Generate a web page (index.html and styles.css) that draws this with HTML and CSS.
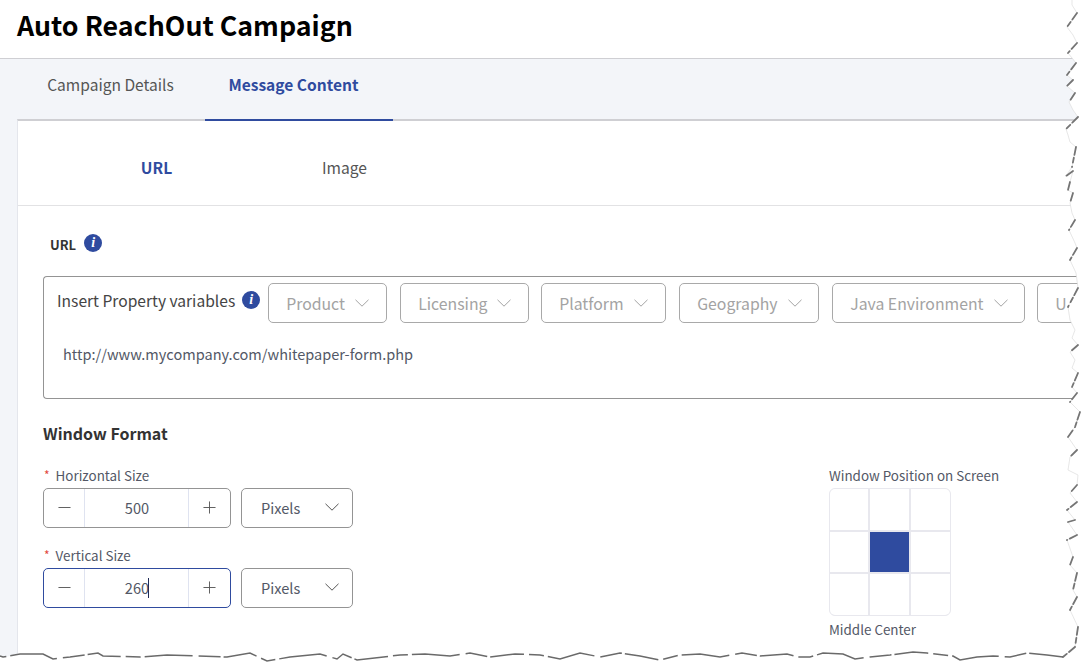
FILE: index.html
```html
<!DOCTYPE html>
<html lang="en">
<head>
<meta charset="utf-8">
<title>Auto ReachOut Campaign</title>
<link rel="stylesheet" href="styles.css">
</head>
<body>
<div class="page">
  <header class="page-header"><h1>Auto ReachOut Campaign</h1></header>
  <div class="shell">
    <nav class="tabs">
      <a class="tab">Campaign Details</a>
      <a class="tab tab-active">Message Content</a>
    </nav>
    <main class="panel">
      <div class="subtabs">
        <a class="subtab subtab-active">URL</a>
        <a class="subtab subtab-image">Image</a>
      </div>
      <section class="content">
        <div class="url-label"><span>URL</span><i class="info">i</i></div>
        <div class="url-box">
          <div class="vars">
            <span class="vars-label">Insert Property variables</span>
            <i class="info info-vars">i</i>
            <div class="chips">
              <span class="chip chip-product">Product<svg class="chev" viewBox="0 0 14 8"><path d="M.5.8 7 7.2 13.5.8"/></svg></span>
              <span class="chip chip-licensing">Licensing<svg class="chev" viewBox="0 0 14 8"><path d="M.5.8 7 7.2 13.5.8"/></svg></span>
              <span class="chip chip-platform">Platform<svg class="chev" viewBox="0 0 14 8"><path d="M.5.8 7 7.2 13.5.8"/></svg></span>
              <span class="chip chip-geo">Geography<svg class="chev" viewBox="0 0 14 8"><path d="M.5.8 7 7.2 13.5.8"/></svg></span>
              <span class="chip chip-java">Java Environment<svg class="chev" viewBox="0 0 14 8"><path d="M.5.8 7 7.2 13.5.8"/></svg></span>
              <span class="chip chip-user">U</span>
            </div>
          </div>
          <div class="url-value">http://www.mycompany.com/whitepaper-form.php</div>
        </div>
        <h2 class="section-title">Window Format</h2>
        <div class="format">
          <div class="sizes">
            <div class="field">
              <label class="field-label"><span class="req">*</span>Horizontal Size</label>
              <div class="controls">
                <div class="stepper">
                  <span class="step"><svg viewBox="0 0 14 14"><path d="M.5 7h13"/></svg></span>
                  <span class="value">500</span>
                  <span class="step step-right"><svg viewBox="0 0 14 14"><path d="M.5 7h13M7 .5v13"/></svg></span>
                </div>
                <div class="select"><span class="select-text">Pixels</span><svg class="chev chev-dark" viewBox="0 0 14 8"><path d="M.5.8 7 7.2 13.5.8"/></svg></div>
              </div>
            </div>
            <div class="field">
              <label class="field-label"><span class="req">*</span>Vertical Size</label>
              <div class="controls">
                <div class="stepper stepper-focus">
                  <span class="step"><svg viewBox="0 0 14 14"><path d="M.5 7h13"/></svg></span>
                  <span class="value value-caret">260</span>
                  <span class="step step-right"><svg viewBox="0 0 14 14"><path d="M.5 7h13M7 .5v13"/></svg></span>
                </div>
                <div class="select"><span class="select-text">Pixels</span><svg class="chev chev-dark" viewBox="0 0 14 8"><path d="M.5.8 7 7.2 13.5.8"/></svg></div>
              </div>
            </div>
          </div>
          <div class="position">
            <div class="field-label position-label">Window Position on Screen</div>
            <div class="pos-grid">
              <span></span><span></span><span></span>
              <span></span><span class="pos-on"></span><span></span>
              <span></span><span></span><span></span>
            </div>
            <div class="field-label pos-name">Middle Center</div>
          </div>
        </div>
      </section>
    </main>
  </div>
</div>
<svg class="torn" viewBox="0 0 1088 671" aria-hidden="true">
  <path class="torn-fill" d="M1072 0 L1072 5 1077 13 1067 27 1073 35 1077 43 1068 53 1076 63 1067 75 1073 80 1067 86 1075 93 1069 102 1073 110 1078 117 1066 129 1068 135 1070 142 1076 147 1072 167 1066 176 1073 171 1070 182 1068 190 1073 193 1070 203 1072 213 1075 220 1069 230 1075 243 1077 248 1070 260 1076 273 1078 288 1068 307 1070 320 1075 330 1072 338 1078 345 1070 352 1075 360 1072 368 1078 373 1072 387 1077 393 1070 402 1080 412 1075 427 1068 437 1077 450 1070 457 1068 470 1078 475 1077 485 1070 493 1077 502 1067 510 1075 520 1068 522 1077 535 1067 540 1073 557 1070 565 1077 573 1073 590 1077 597 1070 610 1078 627 1075 647 1063 657 1047 655 1027 652 1010 657 993 657 977 657 960 662 953 657 927 652 913 651 890 655 870 657 855 660 843 653 823 652 810 658 798 658 787 653 760 656 742 652 720 658 700 653 680 655 660 662 640 656 620 652 600 657 580 652 560 660 540 655 515 653 490 658 470 652 450 656 425 653 400 655 357 662 343 653 337 660 320 653 290 658 267 663 250 652 227 658 197 657 167 655 140 658 103 657 98 652 70 658 53 660 43 653 20 653 3 658 0 656 L0 671 1088 671 1088 0 Z"/>
  <path class="torn-faint" d="M1072 0 L1072 5 1077 13 1067 27 1073 35 1077 43 1068 53 1076 63 1067 75 1073 80 1067 86 1075 93 1069 102 1073 110 1078 117 1066 129 1068 135 1070 142 1076 147 1072 167 1066 176 1073 171 1070 182 1068 190 1073 193 1070 203 1072 213 1075 220 1069 230 1075 243 1077 248 1070 260 1076 273 1078 288 1068 307 1070 320 1075 330 1072 338 1078 345 1070 352 1075 360 1072 368 1078 373 1072 387 1077 393 1070 402 1080 412 1075 427 1068 437 1077 450 1070 457 1068 470 1078 475 1077 485 1070 493 1077 502 1067 510 1075 520 1068 522 1077 535 1067 540 1073 557 1070 565 1077 573 1073 590 1077 597 1070 610 1078 627 1075 647 1063 657"/>
  <path class="torn-right" d="M1077 13 1067 27M1077 43 1068 53M1076 63 1067 75M1073 80 1067 86M1075 93 1069 102M1078 117 1066 129M1076 147 1072 167M1073 171 1066 176M1070 182 1068 190M1073 193 1070 203M1075 220 1069 230M1077 248 1070 260M1078 288 1068 307M1078 345 1070 352M1078 373 1072 387M1077 393 1070 402M1080 412 1075 427 1068 437M1077 450 1070 457M1077 485 1070 493M1077 502 1067 510M1075 520 1068 522M1077 535 1067 540M1073 557 1070 565M1077 573 1073 590M1077 597 1070 610M1078 627 1075 647 1063 657"/>
  <path class="torn-bottom" d="M1063 657 1047 655 1027 653 1010 657 993 656 977 657 960 660 953 656 927 653 913 652 890 655 870 657 855 659 843 654 823 653 810 657 798 657 787 654 760 656 742 653 720 657 700 654 680 655 660 660 640 656 620 653 600 657 580 653 560 659 540 655 515 654 490 657 470 653 450 656 425 654 400 655 357 660 343 654 337 659 320 654 290 657 267 661 250 653 227 657 197 656 167 655 140 657 103 656 98 653 70 657 53 659 43 654 20 654 3 657 0 656"/>
</svg>
</body>
</html>
```
FILE: styles.css
```css
* { box-sizing: border-box; }
html, body { margin: 0; height: 671px; overflow: hidden; background: #fff; }
body { font-family: "Noto Sans CJK SC", "Noto Sans", sans-serif; color: #535866; position: relative; width: 1088px; }
.page { width: 1088px; height: 671px; display: flex; flex-direction: column; overflow: hidden; }

.page-header { height: 59px; border-bottom: 1px solid #cfcfd3; padding: 7px 0 0 17px; }
.page-header h1 { margin: 0; font-size: 26.75px; line-height: 36px; font-weight: 700; color: #000; white-space: nowrap; }

.shell { flex: 1; background: #f3f5f9; padding-left: 17px; display: flex; flex-direction: column; }
.tabs { height: 62px; display: flex; }
.tab { width: 188px; height: 62px; padding-top: 13px; padding-right: 1px; text-align: center; font-size: 15.55px; line-height: 24px; color: #555; border-bottom: 2px solid transparent; position: relative; z-index: 1; }
.tab-active { color: #2f4b9f; font-weight: 700; border-bottom-color: #2f4b9f; padding-right: 11px; }

.panel { flex: 1; margin-top: -2px; background: #fff; border-top: 2px solid #cfcfd3; border-left: 1px solid #e4e6ec; }
.subtabs { height: 85px; display: flex; border-bottom: 1px solid #e2e2e4; padding-left: 45px; }
.subtab { width: 187px; padding-top: 34px; text-align: center; font-size: 15.6px; line-height: 24px; color: #555; }
.subtab-active { color: #2f4b9f; font-weight: 700; }
.subtab-image { padding-left: 2px; }

.content { padding: 0 0 0 25px; }
.url-label { display: flex; align-items: center; height: 20px; margin: 28px 0 0 7px; font-size: 13px; font-weight: 700; color: #333; }
.info { display: inline-block; width: 18px; height: 18px; margin-left: 8px; border-radius: 50%; background: #2f4b9f; color: #fff; font: italic 700 14px/18px "Liberation Serif", serif; text-align: center; flex: none; position: relative; top: -1px; }
.url-box { height: 123px; margin-top: 22px; border: 1px solid #949494; border-right: 0; border-radius: 4px 0 0 4px; padding: 6px 0 0 13px; overflow: hidden; }
.vars { display: flex; align-items: flex-start; }
.vars-label { font-size: 15.6px; line-height: 24px; color: #444; white-space: nowrap; margin-top: 5px; }
.info-vars { margin: 9px 8px 0 7px; }
.chips { display: flex; gap: 13px; }
.chip { height: 40px; padding-left: 17px; border: 1px solid #a9a9a9; border-radius: 5px; display: flex; align-items: center; gap: 10px; font-size: 15.8px; color: #a3a3a3; white-space: nowrap; flex: none; }
.chip-product { width: 119px; }
.chip-licensing { width: 129px; margin-right: -1px; }
.chip-platform { width: 125px; }
.chip-geo { width: 140px; }
.chip-java { width: 193px; margin-right: -1px; }
.chip-user { width: 51px; border-right: 0; border-radius: 5px 0 0 5px; }
.chev { width: 14px; height: 8px; fill: none; stroke: #a3a3a3; stroke-width: 1; flex: none; }
.chev-dark { stroke: #555; margin-left: auto; }
.url-value { margin: 19px 0 0 6px; font-size: 14.55px; line-height: 24px; color: #535866; }

.section-title { margin: 22px 0 0; font-size: 16px; line-height: 24px; font-weight: 700; color: #333; }
.format { display: flex; margin-top: 19px; }
.sizes { width: 786px; display: flex; flex-direction: column; gap: 16px; flex: none; }
.field { display: flex; flex-direction: column; }
.field-label { display: block; font-size: 13.4px; line-height: 22px; color: #535866; height: 24px; }
.req { color: #e2483c; font-size: 12px; margin: 0 6px 0 1px; vertical-align: 1px; }
.controls { display: flex; gap: 10px; height: 40px; }
.stepper { width: 188px; display: flex; border: 1px solid #949494; border-radius: 5px; }
.stepper-focus { border-color: #2f4b9f; }
.step { width: 41px; flex: none; border-right: 1px solid #dfe3f0; display: flex; align-items: center; justify-content: center; padding: 0 0 2px 1px; }
.step-right { border-right: 0; border-left: 1px solid #dfe3f0; width: 42px; padding: 0 1px 2px 0; }
.step svg { width: 13px; height: 13px; fill: none; stroke: #555; stroke-width: 1; }
.value { flex: 1; text-align: center; font-size: 14.6px; line-height: 38px; color: #535866; padding-left: 1px; }
.value-caret { position: relative; }
.value-caret::after { content: ""; position: absolute; left: 63px; top: 9px; width: 1px; height: 20px; background: #1f2a55; }
.select { width: 112px; border: 1px solid #949494; border-radius: 5px; display: flex; align-items: center; padding: 0 13px 2px 19px; font-size: 14.6px; color: #535866; }
.select-text { display: block; }

.position { width: 180px; flex: none; }
.pos-grid { width: 122px; height: 128px; display: grid; grid-template-columns: 38px 39px 1fr; grid-template-rows: repeat(3, 1fr); background: #e8e8ee; gap: 2px; border: 1px solid #e8e8ee; border-radius: 6px; overflow: hidden; }
.pos-grid span { background: #fff; }
.pos-grid .pos-on { background: #2f4b9f; }
.pos-name { margin-top: 2px; }

.torn { position: absolute; left: 0; top: 0; width: 1088px; height: 671px; pointer-events: none; }
.torn-fill { fill: #fff; }
.torn-faint { fill: none; stroke: #dcdcdc; stroke-width: .7; }
.torn-right { fill: none; stroke: #757575; stroke-width: 1.8; stroke-linecap: round; stroke-dasharray: 8 3 5 4; filter: blur(.35px); }
.torn-bottom { fill: none; stroke: #6a6a6a; stroke-width: 1.5; stroke-dasharray: 34 3 22 6 48 4 15 5; filter: blur(.35px); }
```
